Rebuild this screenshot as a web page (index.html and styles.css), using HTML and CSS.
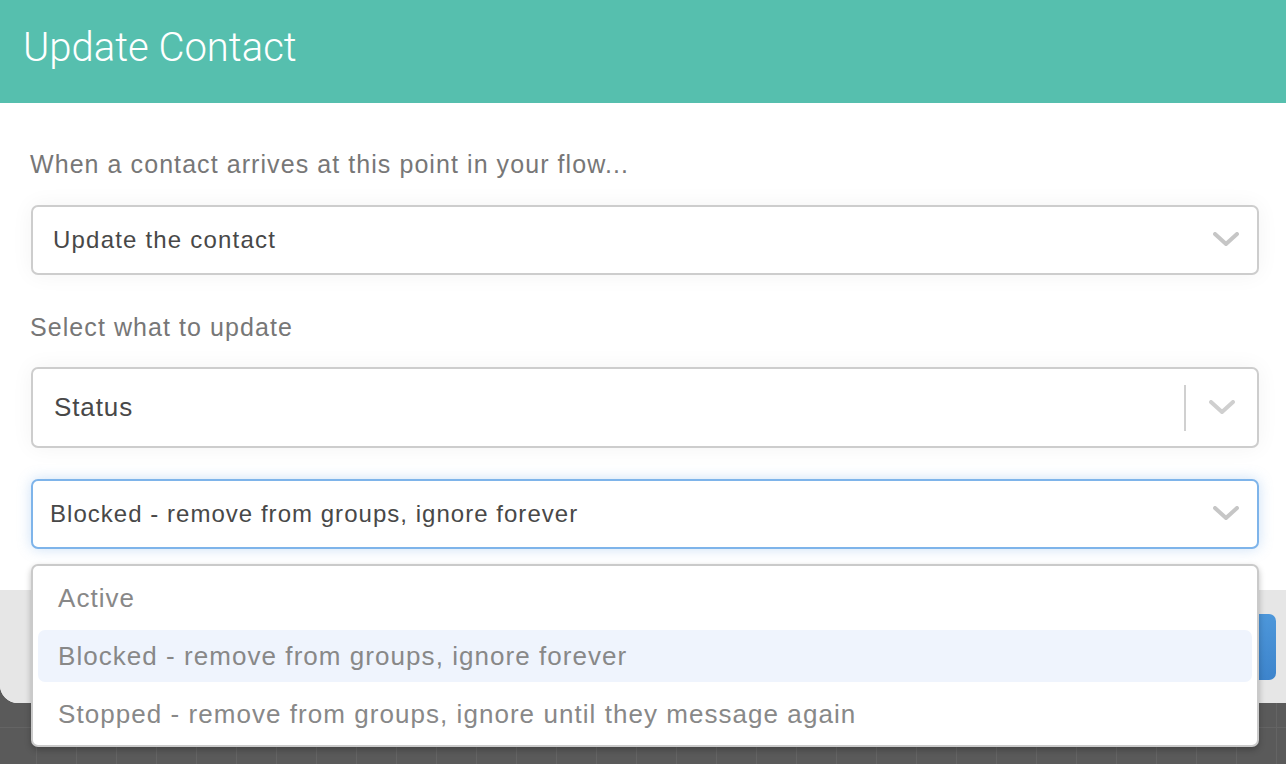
FILE: index.html
```html
<!DOCTYPE html>
<html lang="en">
<head>
    <meta charset="utf-8">
    <title>Update Contact</title>
    <link rel="stylesheet" href="styles.css">
</head>
<body>
    <div class="modal">
        <div class="modal-header">
            <h1>Update Contact</h1>
        </div>

        <div class="modal-body">
            <div class="field-label">When a contact arrives at this point in your flow...</div>
            <div class="select">
                <span class="select-value">Update the contact</span>
                <svg class="chevron" width="26" height="16" viewBox="0 0 26 16"><path d="M2 2 L13 12 L24 2" fill="none" stroke="#c6c6c6" stroke-width="4" stroke-linecap="round" stroke-linejoin="round"/></svg>
            </div>

            <div class="field-label second">Select what to update</div>
            <div class="select select-tall">
                <span class="select-value big">Status</span>
                <span class="separator"></span>
                <svg class="chevron" width="26" height="16" viewBox="0 0 26 16"><path d="M2 2 L13 12 L24 2" fill="none" stroke="#cfcfcf" stroke-width="4" stroke-linecap="round" stroke-linejoin="round"/></svg>
            </div>

            <div class="status-wrap">
                <div class="select focused">
                    <span class="select-value tight">Blocked - remove from groups, ignore forever</span>
                    <svg class="chevron" width="26" height="16" viewBox="0 0 26 16"><path d="M2 2 L13 12 L24 2" fill="none" stroke="#c6c6c6" stroke-width="4" stroke-linecap="round" stroke-linejoin="round"/></svg>
                </div>
                <div class="menu">
                    <div class="option">Active</div>
                    <div class="option selected">Blocked - remove from groups, ignore forever</div>
                    <div class="option">Stopped - remove from groups, ignore until they message again</div>
                </div>
            </div>
        </div>

        <div class="modal-footer">
            <button class="ok-btn">Ok</button>
        </div>
    </div>
</body>
</html>
```

FILE: styles.css
```css
body {
    margin: 0;
    height: 764px;
    overflow: hidden;
    background-color: #5a5a5a;
    background-image:
        linear-gradient(to right, #646464 1px, transparent 1px),
        linear-gradient(to bottom, #646464 1px, transparent 1px);
    background-size: 40px 40px;
    background-position: 36px 7px;
    font-family: 'Liberation Sans', Arial, sans-serif;
}
.modal {
    background: white;
    border-bottom-left-radius: 18px;
}
.modal-header {
    height: 103px;
    background: #56bfae;
    padding-left: 23px;
    display: flex;
    align-items: center;
}
h1 {
    margin: 0 0 8px 0;
    font-family: Roboto, sans-serif;
    font-weight: 300;
    font-size: 40px;
    color: white;
}
.modal-body {
    padding: 46px 27px 41px 31px;
    display: flex;
    flex-direction: column;
}
.field-label {
    margin-left: -1px;
    font-size: 25px;
    line-height: 30px;
    letter-spacing: 1.07px;
    color: #777;
    margin-bottom: 26px;
}
.field-label.second {
    margin-top: 37px;
    margin-bottom: 25px;
}
.select {
    height: 70px;
    box-sizing: border-box;
    border: 2px solid #cdcdcd;
    border-radius: 7px;
    display: flex;
    align-items: center;
    padding: 0 18px 0 20px;
    background: white;
    box-shadow: 0 0 22px rgba(0, 0, 0, 0.05);
}
.select-tall {
    height: 81px;
    padding-left: 21px;
    padding-right: 22px;
}
.select-value {
    flex: 1;
    font-size: 24px;
    letter-spacing: 1.2px;
    color: #484848;
}
.select-value.big {
    font-size: 26px;
    letter-spacing: 0.9px;
}
.select-value.tight {
    margin-left: -3px;
    letter-spacing: 1.03px;
}
.separator {
    width: 2px;
    height: 46px;
    background: #d0d0d0;
    margin-right: 23px;
}
.chevron {
    flex-shrink: 0;
}
.status-wrap {
    position: relative;
    margin-top: 31px;
}
.select.focused {
    border-color: #7eb4ea;
    box-shadow: 0 0 14px rgba(110, 165, 230, 0.35);
}
.menu {
    position: absolute;
    top: 85px;
    left: 0;
    right: 0;
    z-index: 2;
    background: white;
    border: 2px solid #cacaca;
    border-radius: 7px;
    box-shadow: 0 3px 6px rgba(0, 0, 0, 0.25);
    padding: 6px 5px 5px 5px;
    display: flex;
    flex-direction: column;
    gap: 6px;
}
.option {
    height: 52px;
    line-height: 52px;
    padding-left: 20px;
    font-size: 26px;
    letter-spacing: 1.05px;
    color: #888;
    border-radius: 7px;
}
.option.selected {
    background: #eff4fd;
}
.modal-footer {
    height: 113px;
    background: #e6e6e6;
    border-bottom-left-radius: 18px;
    display: flex;
    justify-content: flex-end;
    padding: 24px 10px 0 0;
    box-sizing: border-box;
}
.ok-btn {
    width: 140px;
    height: 66px;
    border: none;
    border-radius: 7px;
    background: linear-gradient(#4d97da, #3d84cc);
    color: white;
    font-size: 24px;
}
```
